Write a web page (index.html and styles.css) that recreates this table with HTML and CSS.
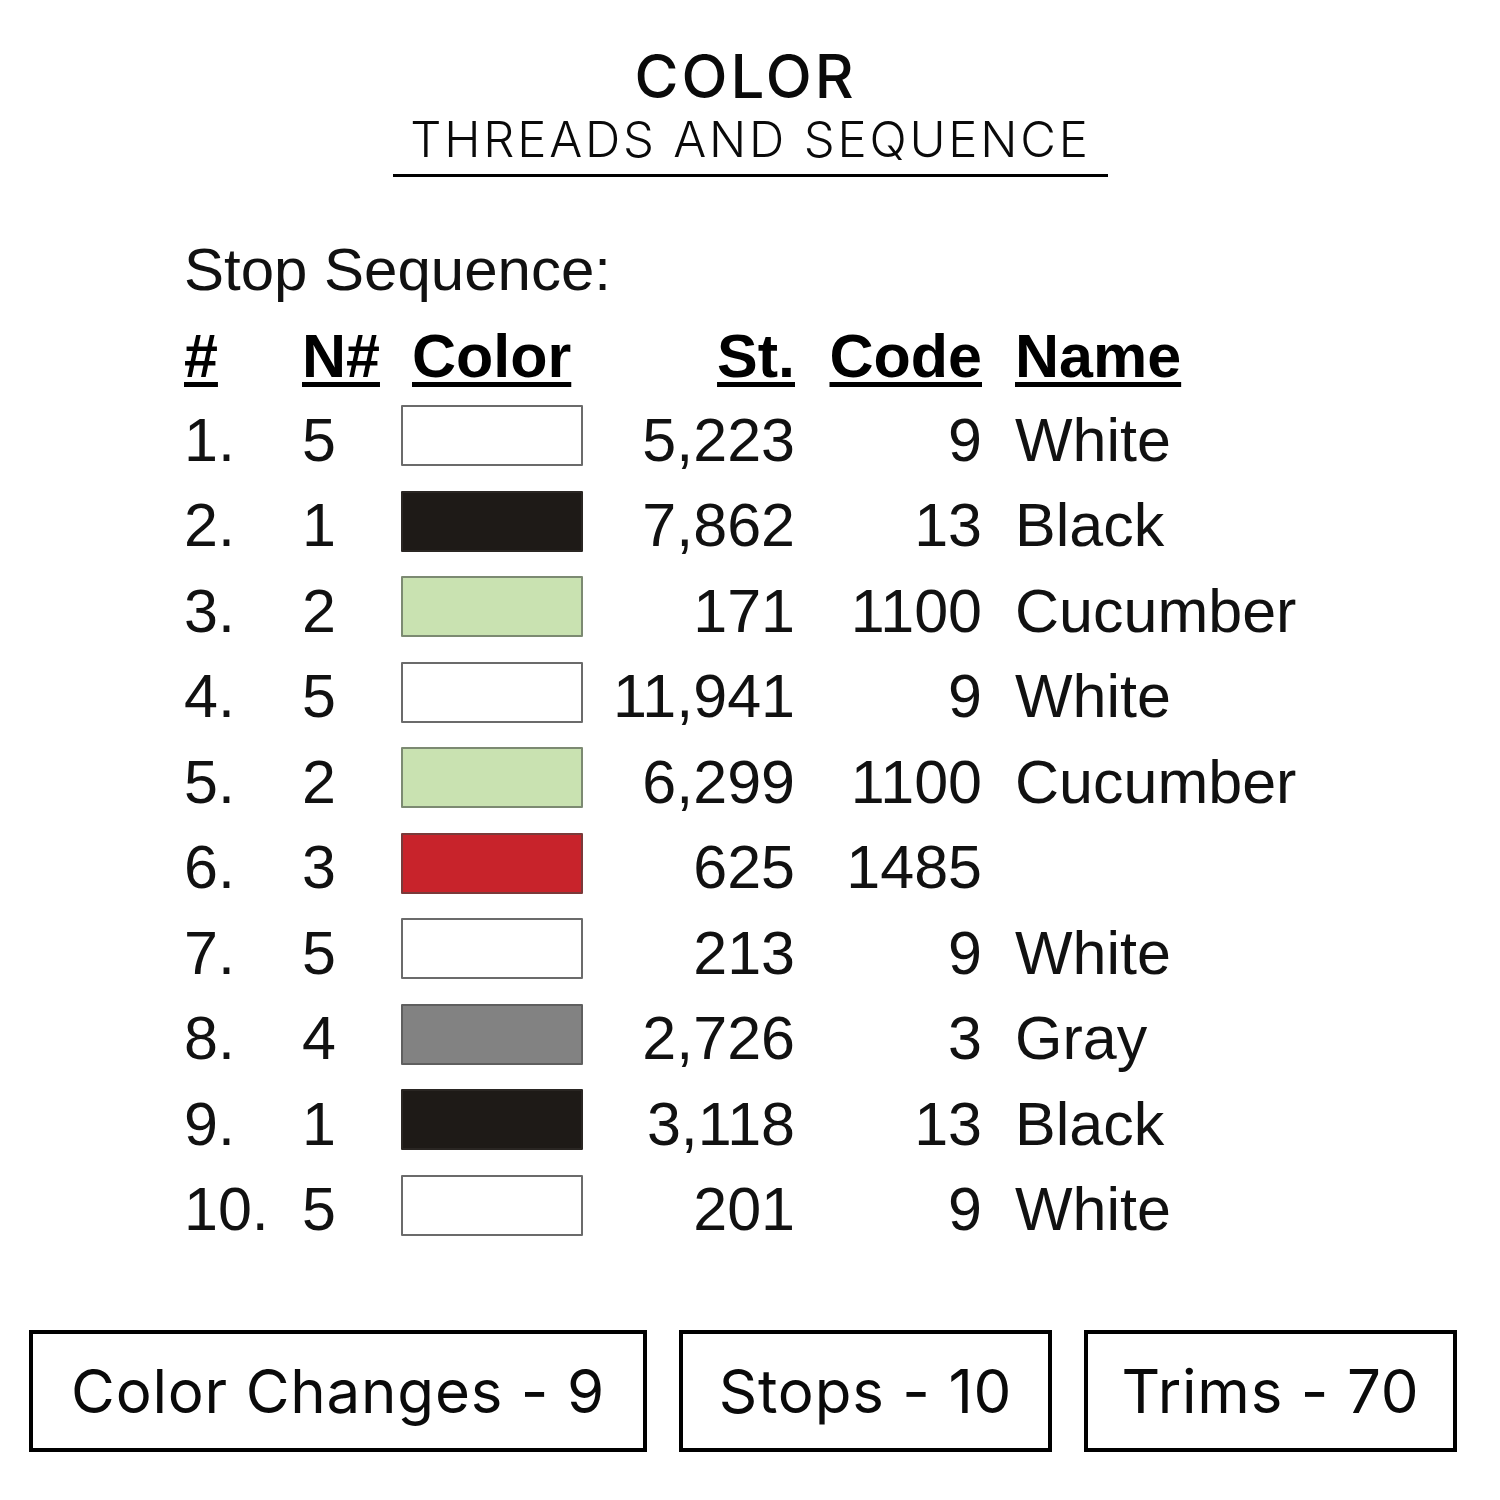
FILE: index.html
```html
<!DOCTYPE html>
<html>
<head>
<meta charset="utf-8">
<link rel="stylesheet" href="styles.css">
</head>
<body>
<header class="head">
  <h1 class="title">COLOR</h1>
  <div class="sub-wrap"><h2 class="subtitle">THREADS AND SEQUENCE</h2></div>
</header>
<section class="seq">
  <div class="seq-label">Stop Sequence:</div>
  <div class="grid">
    <div class="th">#</div><div class="th">N#</div><div class="th th-color">Color</div><div class="th num">St.</div><div class="th num">Code</div><div class="th name">Name</div>

    <div class="c">1.</div><div class="c">5</div><div class="sw white"></div><div class="c num">5,223</div><div class="c num">9</div><div class="c name">White</div>
    <div class="c">2.</div><div class="c">1</div><div class="sw black"></div><div class="c num">7,862</div><div class="c num">13</div><div class="c name">Black</div>
    <div class="c">3.</div><div class="c">2</div><div class="sw green"></div><div class="c num">171</div><div class="c num">1100</div><div class="c name">Cucumber</div>
    <div class="c">4.</div><div class="c">5</div><div class="sw white"></div><div class="c num">11,941</div><div class="c num">9</div><div class="c name">White</div>
    <div class="c">5.</div><div class="c">2</div><div class="sw green"></div><div class="c num">6,299</div><div class="c num">1100</div><div class="c name">Cucumber</div>
    <div class="c">6.</div><div class="c">3</div><div class="sw red"></div><div class="c num">625</div><div class="c num">1485</div><div class="c name"></div>
    <div class="c">7.</div><div class="c">5</div><div class="sw white"></div><div class="c num">213</div><div class="c num">9</div><div class="c name">White</div>
    <div class="c">8.</div><div class="c">4</div><div class="sw gray"></div><div class="c num">2,726</div><div class="c num">3</div><div class="c name">Gray</div>
    <div class="c">9.</div><div class="c">1</div><div class="sw black"></div><div class="c num">3,118</div><div class="c num">13</div><div class="c name">Black</div>
    <div class="c">10.</div><div class="c">5</div><div class="sw white"></div><div class="c num">201</div><div class="c num">9</div><div class="c name">White</div>
  </div>
</section>
<footer class="stats">
  <div class="stat stat-wide">Color Changes - 9</div>
  <div class="stat">Stops - 10</div>
  <div class="stat">Trims - 70</div>
</footer>
</body>
</html>
```
FILE: styles.css
```css
html, body {
  margin: 0;
  padding: 0;
  background: #ffffff;
  color: #000000;
}
body {
  width: 1500px;
  height: 1500px;
  overflow: hidden;
}
.head {
  padding-top: 41px;
  text-align: center;
  font-family: Inter, "Open Sans", sans-serif;
}
.title {
  margin: 0;
  padding-right: 9px;
  font-size: 60px;
  line-height: 70px;
  font-weight: 500;
  letter-spacing: 3px;
  color: #0a0a0a;
}
.sub-wrap {
  display: flex;
  justify-content: center;
  padding-top: 4px;
}
.subtitle {
  margin: 0;
  width: 715px;
  font-size: 49px;
  line-height: 50px;
  font-weight: 300;
  letter-spacing: 2.8px;
  text-indent: 1px;
  padding-bottom: 9px;
  border-bottom: 3px solid #000;
  color: #0a0a0a;
}
.seq {
  padding-left: 184px;
  font-family: "Liberation Sans", Arial, sans-serif;
  font-size: 61px;
  color: #111;
}
.seq-label {
  font-size: 60px;
  margin-top: 48px;
  line-height: 89.5px;
}
.grid {
  display: grid;
  grid-template-columns: 118px 99px 182px 212px 187px auto;
  grid-template-rows: 84px;
  grid-auto-rows: 85.5px;
  margin-top: -1px;
}
.th {
  font-weight: 700;
  line-height: 84px;
  text-decoration: underline;
  text-decoration-thickness: 5px;
  text-underline-offset: 5px;
  color: #000;
}
.th-color {
  padding-left: 11px;
}
.c {
  line-height: 85.5px;
  white-space: nowrap;
}
.num {
  text-align: right;
}
.name {
  padding-left: 33px;
}
.sw {
  margin-top: 7.5px;
  height: 57px;
  border: 2.5px solid #6b6b6b;
  border-radius: 1px;
}
.white { background: #ffffff; }
.black { background: #1e1a17; border-color: #2a2623; }
.green { background: #c9e2b1; border-color: #7c8a72; }
.red { background: #c8232b; border-color: #7a3a3a; }
.gray { background: #828282; border-color: #5f5f5f; }
.stats {
  display: flex;
  gap: 32px;
  padding-left: 29px;
  margin-top: 77px;
  font-family: Inter, "Open Sans", sans-serif;
}
.stat {
  box-sizing: border-box;
  width: 373px;
  height: 122px;
  border: 4px solid #000;
  display: flex;
  align-items: center;
  justify-content: center;
  font-size: 60px;
  letter-spacing: 0.8px;
  color: #0a0a0a;
}
.stat-wide {
  width: 618px;
}
```
